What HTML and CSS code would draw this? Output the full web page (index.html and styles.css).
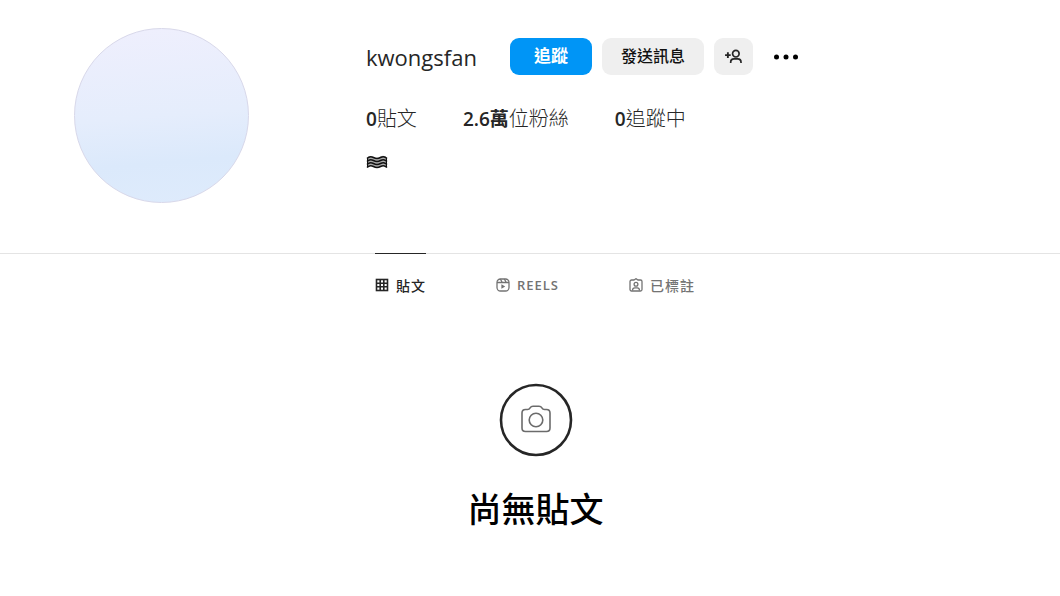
FILE: index.html
```html
<!doctype html>
<html lang="zh-Hant">
  <head>
    <meta charset="UTF-8" />
    <meta name="viewport" content="width=device-width, initial-scale=1.0" />
    <title>kwongsfan</title>
    <link rel="stylesheet" href="styles.css">
  </head>
  <body>
    <header class="profile">
      <div class="avatar"></div>

      <section class="info">
        <div class="title-row">
          <h2 class="username">kwongsfan</h2>
          <div class="actions">
            <button class="button primary" type="button">追蹤</button>
            <button class="button" type="button">發送訊息</button>
            <button class="button square" type="button" aria-label="類似的帳號">
              <svg width="19" height="15" viewBox="0 0 20 16" fill="none" stroke="#262626" stroke-width="2">
                <path d="M1 6.500h6M4 3.500v6" />
                <circle cx="12.500" cy="5" r="3.500" stroke-width="1.800" />
                <path d="M7 15v-.8c0-2.200 1.500-3.600 3.600-3.600h3.800c2.100 0 3.600 1.400 3.600 3.600v.8" stroke-width="1.800" />
              </svg>
            </button>
          </div>
          <button class="more" type="button" aria-label="選項">
            <svg width="26" height="8" viewBox="0 0 26 8" fill="#000">
              <circle cx="3.500" cy="4" r="2.500" />
              <circle cx="13" cy="4" r="2.500" />
              <circle cx="22.500" cy="4" r="2.500" />
            </svg>
          </button>
        </div>

        <ul class="stats">
          <li><b>0</b>貼文</li>
          <li><a href="#"><b>2.6萬</b>位粉絲</a></li>
          <li><a href="#"><b>0</b>追蹤中</a></li>
        </ul>

        <svg class="bio" width="22" height="14" viewBox="0 0 22 14" fill="none" stroke="#111">
          <path d="M1 3C3 .8 5 .8 7.500 2S12 3 14.500 1.600 19 .8 21 3v9c-2-1.700-4-1.700-6.500-.3s-4.500 1.300-7 0S3 10.300 1 12z" fill="#aaa" stroke="none" />
          <path d="M1 3.500C3 1.300 5 1.100 7.500 2.500s4.500 1.400 7 0S19 1.300 21 3.500M1 6.500c2-2.200 4-2.400 6.500-1s4.500 1.400 7 0S19 4.300 21 6.500M1 9.500c2-2.200 4-2.400 6.500-1s4.500 1.400 7 0S19 7.300 21 9.500M1 12.500c2-2.200 4-2.400 6.500-1s4.500 1.400 7 0 4.500-1.200 6.500 1" stroke-width="1.500" />
          <path d="M1.500 3v9M20.500 3v9" />
        </svg>
      </section>
    </header>

    <nav class="tabs">
      <a class="tab active" href="#">
        <svg width="14" height="14" viewBox="0 0 14 14" fill="none" stroke="currentColor" stroke-width="1.600">
          <rect x="1.500" y="1.500" width="11" height="11" />
          <path d="M5.200 1v12M8.800 1v12M1 5.200h12M1 8.800h12" />
        </svg>
        貼文
      </a>
      <a class="tab reels" href="#">
        <svg width="14" height="14" viewBox="0 0 14 14" fill="none" stroke="currentColor" stroke-width="1.300">
          <rect x="1" y="1" width="12" height="12" rx="3.500" />
          <path d="M1 4.500h12M4.300 1l2 3.500M8.300 1l2 3.500" />
          <path d="M5.400 6.200v4.600L9.200 8.500z" fill="currentColor" stroke="none" />
        </svg>
        REELS
      </a>
      <a class="tab" href="#">
        <svg width="14" height="14" viewBox="0 0 14 14" fill="none" stroke="currentColor" stroke-width="1.300">
          <path d="M5 2l2-1.300L9 2h2.500c.8 0 1.500.7 1.500 1.500v8c0 .8-.7 1.500-1.500 1.500h-9C1.700 13 1 12.300 1 11.500v-8C1 2.700 1.700 2 2.500 2z" />
          <circle cx="7" cy="6.300" r="1.900" />
          <path d="M3.500 12.500c0-2 1.200-2.700 2.300-2.700h2.400c1.100 0 2.300.7 2.300 2.700" />
        </svg>
        已標註
      </a>
    </nav>

    <main class="empty">
      <svg width="74" height="74" viewBox="0 0 74 74" fill="none" stroke="#262626">
        <circle cx="37" cy="37" r="35" stroke-width="2.600" />
        <g stroke="#6b6b6b" stroke-width="1.600">
          <path d="M26.500 26.500h2c1.500 0 2-.5 2.600-1.600.7-1.200 1.400-1.700 2.900-1.700h6c1.500 0 2.200.5 2.900 1.700.6 1.100 1.100 1.600 2.600 1.600h2c2 0 3.500 1.500 3.500 3.500v15c0 2-1.500 3.500-3.500 3.500h-21C24.500 48.500 23 47 23 45V30c0-2 1.500-3.500 3.500-3.500z" />
          <circle cx="37" cy="37" r="6.800" />
        </g>
      </svg>
      <h1>尚無貼文</h1>
    </main>
  </body>
</html>
```
FILE: styles.css
```css
* {
  margin: 0;
  padding: 0;
  box-sizing: border-box;
}

body {
  font-family: "Open Sans", "Noto Sans CJK TC", sans-serif;
  background: #fff;
  color: #262626;
}

a {
  color: inherit;
  text-decoration: none;
}

button {
  font-family: inherit;
  border: none;
  cursor: pointer;
}

svg {
  display: block;
}

.profile {
  display: flex;
  gap: 117px;
  padding: 28px 74px 50px;
  border-bottom: 1px solid #e4e4e4;
}

.avatar {
  flex: none;
  width: 175px;
  height: 175px;
  border-radius: 50%;
  border: 1px solid #d8d8ea;
  background: linear-gradient(175deg, #efeffd 0%, #e5edfc 50%, #dbe9fb 75%, #deebfc 100%);
}

.info {
  padding-top: 10px;
}

.title-row {
  display: flex;
  align-items: center;
}

.username {
  margin-right: 33px;
  font-size: 22px;
  font-weight: 400;
  line-height: 30px;
}

.actions {
  display: flex;
  gap: 10px;
}

.button {
  height: 37px;
  padding: 0 19px 4px;
  border-radius: 9px;
  background: #efefef;
  color: #111;
  font-size: 16px;
  font-weight: 500;
}

.primary {
  padding: 0 24px 4px;
  background: #0095f6;
  color: #fff;
  font-size: 17px;
  font-weight: 700;
}

.square {
  padding: 0 10px;
}

.more {
  margin-left: 20px;
  background: none;
}

.stats {
  display: flex;
  gap: 46px;
  margin-top: 28px;
  font-size: 20px;
  font-weight: 300;
  line-height: 32px;
  list-style: none;
}

.stats b {
  font-size: 19px;
  font-weight: 600;
}

.bio {
  margin-top: 20px;
}

.tabs {
  display: flex;
  justify-content: center;
  gap: 70px;
  margin-top: -1px;
  padding-left: 10px;
}

.tab {
  display: flex;
  align-items: center;
  gap: 7px;
  height: 62px;
  border-top: 1px solid transparent;
  color: #737373;
  font-size: 14px;
  font-weight: 500;
  letter-spacing: 1px;
}

.active {
  border-color: #262626;
  color: #262626;
}

.reels {
  font-size: 13px;
  font-weight: 600;
}

.empty {
  display: flex;
  flex-direction: column;
  align-items: center;
  padding: 68px 0 40px 11px;
}

.empty h1 {
  margin-top: 26px;
  color: #000;
  font-size: 34px;
  font-weight: 500;
}
```
